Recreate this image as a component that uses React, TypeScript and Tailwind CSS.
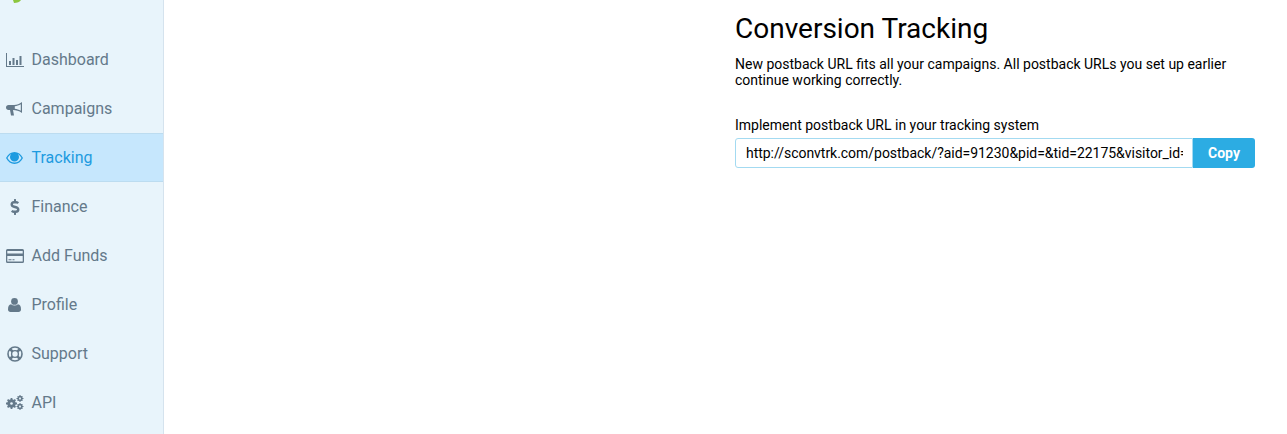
import React from 'react';
import { FaDollarSign } from 'react-icons/fa';

type IconProps = { className?: string };

const BarChartIcon = ({ className }: IconProps) => (
  <svg className={className} width="18" height="14" viewBox="0 0 18 14" fill="currentColor">
    <path d="M0 0h1v13h17v1H0z" />
    <path d="M3 8h2v4H3zM6.500 5h2v7h-2zM10 7h2v5h-2zM13.500 3h2v9h-2z" />
  </svg>
);

const BullhornIcon = ({ className }: IconProps) => (
  <svg className={className} width="17" height="14" viewBox="0 0 17 14" fill="currentColor">
    <path fillRule="evenodd" d="M16 0v11c-3-2.200-6-3-9-3l1 5.500H5L4 8H2.500C1 8 0 7 0 5.600 0 4.200 1 3 2.500 3H8c3 0 5.500-1 8-3zm-1.200 2.300C12.900 3.500 10.800 4.100 8.800 4.200v2.600c2 .2 4.100.8 6 2z" />
  </svg>
);

const EyeIcon = ({ className }: IconProps) => (
  <svg className={className} width="17" height="12" viewBox="0 0 17 12" fill="currentColor">
    <path fillRule="evenodd" d="M8.500 0c3.500 0 6.500 2.200 8.500 6-2 3.800-5 6-8.500 6S2 9.800 0 6c2-3.800 5-6 8.500-6zM5.100 1.900C3.700 2.700 2.500 4.100 1.500 6c1.700 2.900 4.100 4.600 7 4.600s5.300-1.700 7-4.600c-1-1.900-2.200-3.300-3.600-4.100.7.800 1.100 1.900 1.100 3.100a4.500 4.500 0 0 1-9 0c0-1.200.4-2.300 1.100-3.100z" />
    <path fillRule="evenodd" d="M8.500 1.800a3.200 3.200 0 1 1 0 6.400 3.200 3.200 0 0 1 0-6.400zM7 2.800a1.300 1.300 0 1 0 0 2.600 1.300 1.300 0 0 0 0-2.600z" />
  </svg>
);

const CardIcon = ({ className }: IconProps) => (
  <svg className={className} width="18" height="14" viewBox="0 0 18 14" fill="currentColor">
    <path fillRule="evenodd" d="M1.500 0h15A1.500 1.500 0 0 1 18 1.500v11a1.500 1.500 0 0 1-1.500 1.500h-15A1.500 1.500 0 0 1 0 12.500v-11A1.500 1.500 0 0 1 1.500 0zM1.300 2v2.500h15.400V2zm0 5v5.500h15.400V7zM2.500 10.200h3v1h-3zm4 0h2v1h-2z" />
  </svg>
);

const UserIcon = ({ className }: IconProps) => (
  <svg className={className} width="13" height="14" viewBox="0 0 13 14" fill="currentColor">
    <circle cx="6.500" cy="3.400" r="3.400" />
    <path d="M3 6.200c1 .8 2.200 1.200 3.500 1.200S9 7 10 6.200c2 .2 3 2 3 5.300 0 1.600-1 2.500-2.500 2.500h-8C1 14 0 13.100 0 11.500c0-3.300 1-5.100 3-5.300z" />
  </svg>
);

const LifeRingIcon = ({ className }: IconProps) => (
  <svg className={className} width="16" height="16" viewBox="0 0 16 16" fill="none" stroke="currentColor">
    <circle cx="8" cy="8" r="7" strokeWidth="1.600" />
    <circle cx="8" cy="8" r="3.400" strokeWidth="1.400" />
    <path d="M3 3l2.600 2.600M13 3l-2.600 2.600M3 13l2.600-2.600M13 13l-2.600-2.600" strokeWidth="2.600" />
  </svg>
);

const CogsIcon = ({ className }: IconProps) => (
  <svg className={className} width="18" height="15" viewBox="0 0 18 15" fill="none" stroke="currentColor">
    <circle cx="5.500" cy="8.500" r="3" strokeWidth="2.600" />
    <path d="M5.500 3v11M0 8.500h11M1.600 4.600l7.800 7.800M9.400 4.600l-7.800 7.800" strokeWidth="1.800" />
    <circle cx="5.500" cy="8.500" r="1.300" fill="#e8f4fb" stroke="none" />
    <circle cx="14" cy="3.500" r="2" strokeWidth="1.300" />
    <path d="M14 0v7M10.500 3.500h7M11.500 1l5 5M16.500 1l-5 5" strokeWidth="1" />
    <circle cx="14" cy="3.500" r="1" fill="#e8f4fb" stroke="none" />
    <circle cx="14" cy="11.500" r="2" strokeWidth="1.300" />
    <path d="M14 8v7M10.500 11.500h7M11.500 9l5 5M16.500 9l-5 5" strokeWidth="1" />
    <circle cx="14" cy="11.500" r="1" fill="#e8f4fb" stroke="none" />
  </svg>
);

const navItems = [
  { label: 'Dashboard', icon: <BarChartIcon /> },
  { label: 'Campaigns', icon: <BullhornIcon /> },
  { label: 'Tracking', icon: <EyeIcon />, active: true },
  { label: 'Finance', icon: <FaDollarSign size={16} /> },
  { label: 'Add Funds', icon: <CardIcon /> },
  { label: 'Profile', icon: <UserIcon /> },
  { label: 'Support', icon: <LifeRingIcon /> },
  { label: 'API', icon: <CogsIcon /> },
];

const App: React.FC = () => {
  return (
    <div className="flex h-[434px] w-[1287px] overflow-hidden bg-white font-['Roboto',sans-serif]">
      <aside className="relative h-full w-[164px] shrink-0 border-r border-[#d5e3ee] bg-[#e8f4fb] pt-[35px]">
        {/* bottom of the logo, cut off by the page edge */}
        <svg className="absolute left-[12px] top-0" width="10" height="3" viewBox="0 0 10 3">
          <path d="M1 0h8C8 2 5 3 2 3z" fill="#8cc63f" />
        </svg>
        {navItems.map(({ label, icon, active }) => (
          <div
            key={label}
            className={
              active
                ? 'flex h-[49px] items-center border-y border-[#bcdcf0] bg-[#c6e7fd] text-[#1e9be0]'
                : 'flex h-[49px] items-center text-[#64798a]'
            }
          >
            <span className="flex w-[31.500px] shrink-0 justify-center pl-[2px] pr-[4px]">{icon}</span>
            <span className="text-base leading-none">{label}</span>
          </div>
        ))}
      </aside>

      <main className="flex-1 pl-[571px] pr-[32px] pt-[12px] text-black">
        <h1 className="text-[28px] font-normal leading-[34px]">Conversion Tracking</h1>
        <p className="mt-[10px] text-sm leading-[16px]">
          New postback URL fits all your campaigns. All postback URLs you set up earlier continue working correctly.
        </p>
        <label className="mt-[29px] block text-sm leading-[16px]">Implement postback URL in your tracking system</label>
        <div className="mt-[5px] flex h-[30px]">
          <input
            readOnly
            value="http://sconvtrk.com/postback/?aid=91230&pid=&tid=22175&visitor_id={visitor_id}"
            className="min-w-0 flex-1 rounded-l-[3px] border border-[#a3daf1] bg-white pl-[10px] pr-[9px] text-sm tracking-[-0.03px] outline-none"
          />
          <button className="w-[62px] shrink-0 rounded-r-[3px] bg-[#2cace3] text-sm font-bold text-white">Copy</button>
        </div>
      </main>
    </div>
  );
};

export default App;
